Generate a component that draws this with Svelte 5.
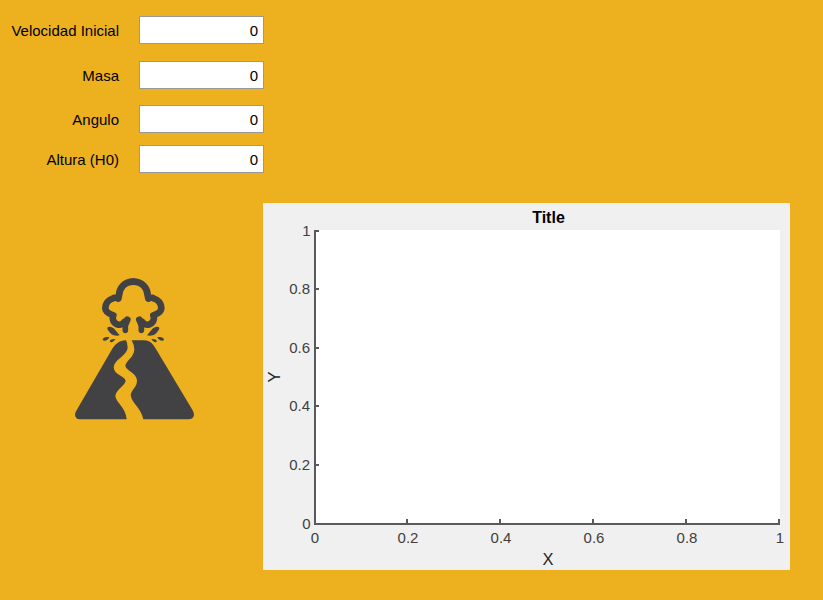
<script>
  const fields = $state([
    { id: 'velocidad', label: 'Velocidad Inicial', value: '0', gap: 17 },
    { id: 'masa', label: 'Masa', value: '0', gap: 16 },
    { id: 'angulo', label: 'Angulo', value: '0', gap: 12 },
    { id: 'altura', label: 'Altura (H0)', value: '0', gap: 0 },
  ]);
  const xTicks = [
    { x: 52, t: '0' }, { x: 144, t: '0.2' }, { x: 237, t: '0.4' },
    { x: 330, t: '0.6' }, { x: 423, t: '0.8' }, { x: 516, t: '1' },
  ];
  const yTicks = [
    { y: 28, t: '1' }, { y: 86, t: '0.8' }, { y: 145, t: '0.6' },
    { y: 203, t: '0.4' }, { y: 262, t: '0.2' }, { y: 321, t: '0' },
  ];
</script>

{#snippet cloudHalf()}
  <path stroke-width="20" d="M115 35C89 35 73 53 72 76L70 86C68 82 61 81 54 85C40 89 31 101 31 115C31 124 40 131 55 136C50 148 56 160 69 164Q80 166 88 156" />
  <path stroke-width="20" d="M97 149L91 162" />
  <path stroke-width="17" d="M91 162V181" />
  <g fill="#424143" stroke="none">
    <path d="M38 172C44 167 56 173 60 179L74 196C62 199 51 195 45 188C39 182 35 176 38 172Z" />
    <path d="M23 209C24 202 33 200 43 202C39 211 27 216 23 209ZM44 214C46 208 53 206 61 207C57 214 48 220 44 214Z" />
  </g>
{/snippet}

<main>
  <form>
    {#each fields as f}
      <div class="row" style:margin-bottom="{f.gap}px">
        <label for={f.id}>{f.label}</label>
        <input id={f.id} bind:value={f.value} />
      </div>
    {/each}
  </form>
  <section>
    <div class="picture">
      <svg width="130" height="155" viewBox="70 270 130 155" aria-label="Volcán">
        <g transform="translate(65 335) scale(.33333)" fill="#424143">
          <path d="M185 253H45Q30 253 30 238Q31 231 37 222L138 48C150 27 163 16 183 16Q188 24 188 39C186 61 149 73 146 96C147 121 178 121 182 137C179 153 153 164 151 183C154 205 182 216 185 253Z" />
          <path d="M200 16H238C258 17 265 29 276 47L382 224Q389 236 386 244Q383 253 371 253H235C228 218 201 207 197 181C199 163 217 157 216 135C213 111 183 108 181 92C184 76 207 66 208 44Q207 28 200 16Z" />
        </g>
        <g transform="translate(95 270) scale(.33333)" fill="none" stroke="#424143" stroke-linecap="round" stroke-linejoin="round">
          {@render cloudHalf()}
          <g transform="translate(230 0) scale(-1 1)">{@render cloudHalf()}</g>
        </g>
      </svg>
    </div>
    <svg class="chart" width="527" height="367" viewBox="0 0 527 367">
      <rect width="527" height="367" fill="#f0f0f0" />
      <rect x="52" y="27" width="465" height="294" fill="#fff" />
      <g fill="#5a5a5a" shape-rendering="crispEdges">
        <rect x="51" y="27" width="2" height="295" />
        <rect x="51" y="320" width="466" height="2" />
        {#each xTicks as k}<rect x={k.x - 1} y="316" width="2" height="5" />{/each}
        {#each yTicks as k}<rect x="52" y={k.y - 1} width="4" height="2" />{/each}
      </g>
      <g class="ticks">
        {#each xTicks as k}<text x={k.t === '0' ? 52 : k.x + 1} y="340" text-anchor="middle">{k.t}</text>{/each}
        {#each yTicks as k}<text x={k.t.length > 1 ? 47 : 47.5} y={k.y + 5} text-anchor="end">{k.t}</text>{/each}
      </g>
      <text class="title" x="285.5" y="20" text-anchor="middle">Title</text>
      <text class="axis" x="285" y="362" text-anchor="middle">X</text>
      <text class="axis" transform="translate(17 174) rotate(-90)" text-anchor="middle">Y</text>
    </svg>
  </section>
</main>

<style>
  main {
    box-sizing: border-box;
    width: 823px;
    height: 600px;
    padding-top: 16px;
    background: #edb120;
    font-family: "Liberation Sans", Arial, sans-serif;
    overflow: hidden;
  }
  form {
    width: 264px;
  }
  .row {
    display: flex;
    height: 28px;
    align-items: center;
    gap: 20px;
  }
  label {
    width: 119px;
    padding-top: 2px;
    text-align: right;
    font-size: 15px;
    line-height: 20px;
    color: #000;
    white-space: nowrap;
  }
  input {
    box-sizing: border-box;
    width: 125px;
    height: 28px;
    margin: 0;
    padding: 0 5px 0 4px;
    border: 1px solid #999;
    border-radius: 0;
    background: #fff;
    font: 15px "Liberation Sans", Arial, sans-serif;
    text-align: right;
    color: #000;
    outline: none;
  }
  section {
    display: flex;
    margin-top: 30px;
  }
  .picture {
    width: 263px;
    padding: 67px 0 0 70px;
    box-sizing: border-box;
  }
  svg {
    display: block;
  }
  .ticks {
    font-size: 15px;
    fill: #404040;
  }
  .axis {
    font-size: 16.5px;
    fill: #262626;
  }
  .title {
    font-size: 16px;
    font-weight: bold;
    fill: #000;
  }
</style>
